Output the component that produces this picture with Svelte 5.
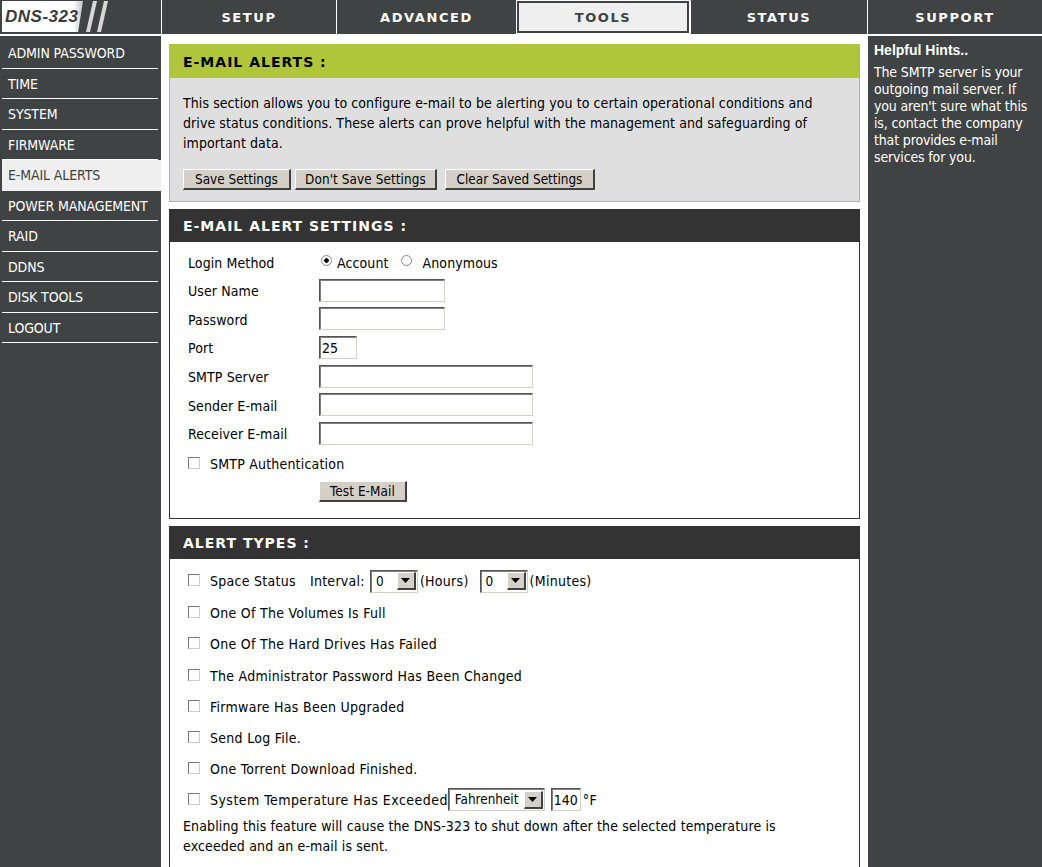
<script>
    const tabs = [
        { label: "SETUP", width: 175 },
        { label: "ADVANCED", width: 180 },
        { label: "TOOLS", width: 174, active: true },
        { label: "STATUS", width: 177 },
        { label: "SUPPORT", width: 175 }
    ];
    const menu = ["ADMIN PASSWORD", "TIME", "SYSTEM", "FIRMWARE", "E-MAIL ALERTS", "POWER MANAGEMENT", "RAID", "DDNS", "DISK TOOLS", "LOGOUT"];
    const fields = [
        { label: "User Name", cls: "mid" },
        { label: "Password", cls: "mid" },
        { label: "Port", cls: "short", value: "25" },
        { label: "SMTP Server", cls: "long" },
        { label: "Sender E-mail", cls: "long" },
        { label: "Receiver E-mail", cls: "long" }
    ];
    const alerts = [
        "One Of The Volumes Is Full",
        "One Of The Hard Drives Has Failed",
        "The Administrator Password Has Been Changed",
        "Firmware Has Been Upgraded",
        "Send Log File.",
        "One Torrent Download Finished."
    ];
</script>

{#snippet checkbox()}
    <span class="check"></span>
{/snippet}

{#snippet select(text, cls)}
    <span class="select {cls}">
        <span class="select-text">{text}</span>
        <span class="arrow"><svg width="9" height="5" viewBox="0 0 9 5"><path d="M0 0h9L4.5 5z" fill="#000" /></svg></span>
    </span>
{/snippet}

<div class="page">
    <header class="topbar">
        <div class="logo">
            <span class="logo-box">DNS-323</span>
            <svg class="slashes" width="30" height="34" viewBox="0 0 30 34">
                <path d="M8 1h4L5 32H1z" fill="#d8d8d8" />
                <path d="M19 1h4L16 32h-4z" fill="#d8d8d8" />
            </svg>
        </div>
        {#each tabs as tab}
            <div class="tab" class:active={tab.active} style="width: {tab.width}px">{tab.label}</div>
        {/each}
    </header>

    <div class="columns">
        <nav class="sidebar">
            {#each menu as item}
                <div class="menu-item" class:current={item === "E-MAIL ALERTS"}>{item}</div>
            {/each}
        </nav>

        <main class="content">
            <section class="panel intro">
                <h2 class="green">E-MAIL ALERTS :</h2>
                <div class="intro-body">
                    <p>This section allows you to configure e-mail to be alerting you to certain operational conditions and drive status conditions. These alerts can prove helpful with the management and safeguarding of important data.</p>
                    <div class="buttons">
                        <span class="btn save">Save Settings</span>
                        <span class="btn dont">Don't Save Settings</span>
                        <span class="btn clear">Clear Saved Settings</span>
                    </div>
                </div>
            </section>

            <section class="panel">
                <h2>E-MAIL ALERT SETTINGS :</h2>
                <div class="settings">
                    <div class="row login">
                        <span class="label">Login Method</span>
                        <span class="radio on"></span><span class="radio-label">Account</span>
                        <span class="radio"></span><span class="radio-label anon">Anonymous</span>
                    </div>
                    {#each fields as field}
                        <div class="row">
                            <span class="label">{field.label}</span>
                            <span class="input {field.cls}">{field.value ?? ""}</span>
                        </div>
                    {/each}
                    <div class="row auth">
                        {@render checkbox()}
                        <span>SMTP Authentication</span>
                    </div>
                    <div class="test"><span class="btn test-btn">Test E-Mail</span></div>
                </div>
            </section>

            <section class="panel last">
                <h2>ALERT TYPES :</h2>
                <div class="alerts">
                    <div class="alert first">
                        {@render checkbox()}
                        <span>Space Status</span>
                        <span class="interval">Interval:</span>
                        {@render select("0", "small")}
                        <span class="unit">(Hours)</span>
                        {@render select("0", "small second")}
                        <span class="unit">(Minutes)</span>
                    </div>
                    {#each alerts as alert}
                        <div class="alert">
                            {@render checkbox()}
                            <span>{alert}</span>
                        </div>
                    {/each}
                    <div class="alert temp">
                        {@render checkbox()}
                        <span class="temp-label">System Temperature Has Exceeded</span>
                        {@render select("Fahrenheit", "wide")}
                        <span class="input temp-input">140</span>
                        <span>°F</span>
                    </div>
                    <p class="note">Enabling this feature will cause the DNS-323 to shut down after the selected temperature is exceeded and an e-mail is sent.</p>
                </div>
            </section>
        </main>

        <aside class="hints">
            <h3>Helpful Hints..</h3>
            <p>The SMTP server is your outgoing mail server. If you aren't sure what this is, contact the company that provides e-mail services for you.</p>
        </aside>
    </div>
</div>

<style>
    :global(body) {
        margin: 0;
        background: #fff;
    }

    .page {
        width: 1042px;
        height: 867px;
        overflow: hidden;
        font-family: "DejaVu Sans Condensed", "Liberation Sans", sans-serif;
        font-size: 14px;
        color: #000;
    }

    .topbar {
        display: flex;
        height: 34px;
        background: #404343;
        margin-bottom: 2px;
    }

    .logo {
        width: 161px;
        display: flex;
        align-items: flex-start;
    }

    .logo-box {
        width: 81px;
        height: 31px;
        margin: 1px 0 0 2px;
        background: linear-gradient(90deg, #fff 88%, #c4c4c4);
        clip-path: polygon(0 0, 100% 0, 94% 100%, 0 100%);
        color: #3a3a3a;
        font-family: "Liberation Sans", sans-serif;
        font-weight: 700;
        font-style: italic;
        font-size: 17px;
        letter-spacing: 0.5px;
        line-height: 31px;
        padding-left: 3px;
        box-sizing: border-box;
        white-space: nowrap;
    }

    .slashes {
        margin-left: 2px;
    }

    .tab {
        box-sizing: border-box;
        border-left: 1px solid #fff;
        color: #fff;
        font-family: "DejaVu Sans", sans-serif;
        font-weight: 700;
        font-size: 13px;
        letter-spacing: 1.6px;
        text-align: center;
        line-height: 35px;
    }

    .tab.active {
        background: #efefef;
        color: #404343;
        border: 2px solid #404343;
        outline: 1px solid #fff;
        outline-offset: -1px;
        line-height: 31px;
        box-shadow: inset 0 0 0 1px #404343;
    }

    .columns {
        display: flex;
        height: 831px;
    }

    .sidebar {
        width: 161px;
        background: #404343;
        padding-top: 2px;
        box-sizing: border-box;
        flex: none;
    }

    .menu-item {
        height: 29.5px;
        margin: 0 3px 0 2px;
        padding-left: 6px;
        border-bottom: 1px solid #fff;
        color: #fff;
        line-height: 31px;
        letter-spacing: -0.12px;
        white-space: nowrap;
    }

    .menu-item.current {
        background: #efefef;
        color: #404343;
        margin-right: 0;
        border-bottom-color: #efefef;
    }

    .content {
        width: 707px;
        padding: 8px 8px 0;
        box-sizing: border-box;
        flex: none;
        display: flex;
        flex-direction: column;
    }

    .panel {
        border: 1px solid #333;
        margin-bottom: 7px;
    }

    .panel.intro {
        border-color: #afc63a;
    }

    .panel.last {
        border-bottom: 0;
        margin-bottom: 0;
        flex: 1;
    }

    h2 {
        margin: 0;
        height: 32px;
        padding-left: 13px;
        background: #333;
        color: #fff;
        font-family: "DejaVu Sans", sans-serif;
        font-size: 14px;
        font-weight: 700;
        letter-spacing: 1px;
        line-height: 33px;
    }

    h2.green {
        background: #afc63a;
        color: #000;
        height: 33px;
        line-height: 34px;
    }

    .intro-body {
        background: #dfdfdf;
        padding: 15px 13px 11px;
    }

    p {
        margin: 0;
    }

    .intro-body p {
        line-height: 20px;
        width: 640px;
        letter-spacing: 0.08px;
    }

    .buttons {
        display: flex;
        gap: 4px;
        margin-top: 16px;
    }

    .btn {
        display: block;
        height: 21px;
        box-sizing: border-box;
        text-align: center;
        background: #d4d0c8;
        border-style: solid;
        border-width: 1px 2px 2px 1px;
        border-color: #fff #404040 #404040 #fff;
        font-size: 13.4px;
        line-height: 20px;
    }

    .save { width: 108px; }
    .dont { width: 142px; letter-spacing: 0.1px; }
    .clear { width: 150px; margin-left: 4px; }
    .test-btn { width: 88px; }

    .settings {
        padding: 5px 18px 16px;
        letter-spacing: 0.1px;
    }

    .row {
        display: flex;
        align-items: center;
        height: 28.7px;
    }

    .label {
        width: 131px;
        flex: none;
        padding-top: 2px;
    }

    .login .label {
        width: 133px;
        padding-top: 4px;
    }

    .input {
        display: block;
        box-sizing: border-box;
        height: 23px;
        background: #fff;
        border-style: solid;
        border-width: 1px;
        border-color: #555 #d4d0c8 #d4d0c8 #555;
        box-shadow: inset 1px 1px 0 #808080;
        line-height: 22px;
        padding-left: 2px;
    }

    .mid { width: 126px; }
    .short { width: 38px; }
    .long { width: 214px; }

    .radio {
        width: 11px;
        height: 11px;
        border-radius: 50%;
        border: 1px solid #888;
        box-sizing: border-box;
        background: #fff;
        flex: none;
        position: relative;
        top: -1px;
    }

    .radio.on {
        background: radial-gradient(circle, #000 0 2px, #fff 2.5px);
    }

    .radio-label {
        margin: 0 12px 0 5px;
        padding-top: 4px;
    }

    .anon {
        margin-left: 11px;
    }

    .check {
        width: 12px;
        height: 12px;
        box-sizing: border-box;
        background: #fff;
        border: 1px solid;
        border-color: #777 #ccc #ccc #777;
        margin-right: 10px;
        flex: none;
        position: relative;
        top: -1px;
    }

    .auth {
        height: 27px;
        margin-top: 3px;
        letter-spacing: 0.2px;
    }

    .test {
        padding-left: 131px;
        margin-top: 3px;
    }

    .test .btn {
        display: inline-block;
    }

    .alerts {
        padding: 6px 13px 0;
    }

    .alert {
        display: flex;
        align-items: center;
        height: 31.1px;
        padding-left: 5px;
        white-space: nowrap;
        letter-spacing: 0.28px;
    }

    .alert.first {
        height: 33px;
    }

    .interval {
        margin-left: 14px;
        margin-right: 5px;
    }

    .unit {
        margin-left: 2px;
    }

    .temp-label {
        letter-spacing: 0.46px;
    }

    .select {
        display: flex;
        box-sizing: border-box;
        height: 23px;
        background: #fff;
        border-style: solid;
        border-width: 1px;
        border-color: #555 #d4d0c8 #d4d0c8 #555;
        box-shadow: inset 1px 1px 0 #808080;
        align-items: center;
        flex: none;
        letter-spacing: 0;
    }

    .select.small { width: 48px; }
    .select.second { margin-left: 11px; }
    .select.wide { width: 97px; }

    .select-text {
        flex: 1;
        padding-left: 5px;
        font-size: 13.4px;
    }

    .wide .select-text {
        padding-left: 6px;
    }

    .arrow {
        width: 19px;
        height: 18px;
        box-sizing: border-box;
        margin-right: 1px;
        background: #d4d0c8;
        border-style: solid;
        border-width: 1px 2px 2px 1px;
        border-color: #fff #404040 #404040 #fff;
        display: flex;
        align-items: center;
        justify-content: center;
    }

    .temp-input {
        width: 30px;
        margin: 0 2px 0 6px;
        letter-spacing: 0;
    }

    .note {
        line-height: 20px;
        margin-top: 1px;
        width: 620px;
        letter-spacing: 0.14px;
    }

    .hints {
        flex: 1;
        background: #404343;
        color: #fff;
        padding: 6px 6px;
        box-sizing: border-box;
    }

    h3 {
        margin: 0 0 6px;
        font-family: "Liberation Sans", sans-serif;
        font-size: 14px;
        font-weight: 700;
    }

    .hints p {
        line-height: 17px;
        letter-spacing: -0.15px;
    }
</style>
